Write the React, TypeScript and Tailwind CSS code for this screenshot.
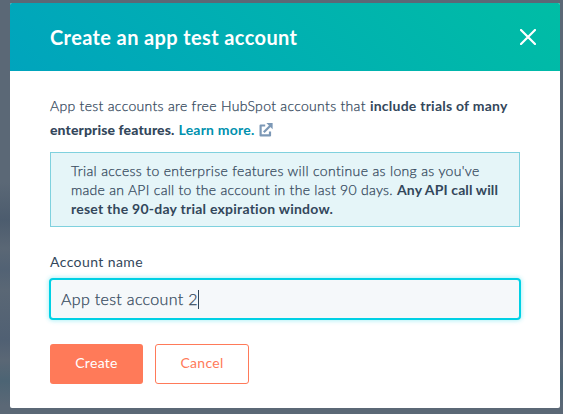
import { useState } from 'react';

function CloseIcon() {
  return (
    <svg width="16" height="16" viewBox="0 0 16 16" fill="none" stroke="#fff" strokeWidth="2.2" strokeLinecap="round">
      <path d="M1 1 15 15M15 1 1 15" />
    </svg>
  );
}

function ExternalLinkIcon() {
  return (
    <svg className="ml-1 shrink-0" width="14" height="14" viewBox="0 0 14 14" fill="none" stroke="#7c98b6" strokeWidth="2.2">
      <path d="M6.2 2.5H1.6V12.4H11V8.6" strokeLinejoin="round" />
      <path d="M4.8 9.2 11.5 2.5" />
      <path d="M7.4 0H13.6V6.2Z" fill="#7c98b6" stroke="none" />
    </svg>
  );
}

export default function App() {
  const [name, setName] = useState('App test account 2');

  return (
    <div className="h-[414px] w-[563px] overflow-hidden bg-[linear-gradient(180deg,#5b6876_0%,#5b6876_44%,#4c5c6e_53%,#5a6775_60%,#526274_65%,#5a6775_70%,#506073_82%,#5a6775_87%,#4c6474_92%,#5b6876_98%)] pl-[10px] pt-[3px] font-['Lato',sans-serif] text-[#33475b]">
      <div className="h-[405px] w-[550px] overflow-hidden rounded-[2px] bg-white">
        <header className="flex h-[68px] items-center justify-between bg-linear-[45deg,#00a4bd,#00bda5] pl-10 pr-6">
          <h1 className="whitespace-nowrap text-[20px] font-bold tracking-[0.38px] text-white">Create an app test account</h1>
          <button aria-label="Close">
            <CloseIcon />
          </button>
        </header>

        <main className="px-10 pt-[23px]">
          <div className="whitespace-nowrap text-[14px] font-light leading-6">
            <p className="tracking-[0.31px] [-webkit-text-stroke:0.25px_#33475b]">
              App test accounts are free HubSpot accounts that{' '}
              <b className="font-bold tracking-[0.24px] [-webkit-text-stroke:0]">include trials of many</b>
            </p>
            <p className="flex items-center font-bold">
              <b className="tracking-[0.12px]">enterprise features.</b>
              <a className="ml-1 tracking-[0.22px] text-[#0091ae]">Learn more.</a>
              <ExternalLinkIcon />
            </p>
          </div>

          <div className="mt-[10px] h-[75px] w-[470px] whitespace-nowrap border border-[#7fd1de] bg-[#e5f5f8] pl-5 pt-[8px] text-[14px] font-light leading-[19px] [-webkit-text-stroke:0.25px_#33475b]">
            <p className="tracking-[0.34px]">Trial access to enterprise features will continue as long as you've</p>
            <p className="tracking-[0.28px]">
              made an API call to the account in the last 90 days.{' '}
              <b className="font-bold tracking-[0.12px] [-webkit-text-stroke:0]">Any API call will</b>
            </p>
            <p>
              <b className="font-bold tracking-[0.24px] [-webkit-text-stroke:0]">reset the 90-day trial expiration window.</b>
            </p>
          </div>

          <label className="mt-[25px] block text-[14px] leading-5 tracking-[0.4px]">Account name</label>
          {/* focused field with the caret after the value */}
          <div className="-ml-px mt-[6px] flex h-[42px] w-[472px] items-center rounded-[4px] border-2 border-[#00d0e4] bg-[#f5f8fa] pl-[10px] text-[16px] font-light shadow-[0_0_4px_1px_rgba(0,208,228,0.3)]">
            <input
              className="field-sizing-content p-0 tracking-[0.33px] outline-none [-webkit-text-stroke:0.25px_#33475b]"
              value={name}
              onChange={(e) => setName(e.target.value)}
            />
            <span className="h-[19px] w-px bg-[#33475b]" />
          </div>

          <div className="mt-6 flex gap-3 text-[14px] tracking-[0.3px]">
            <button className="h-10 w-[93px] rounded-[3px] bg-[#ff7a59] pb-[3px] text-white">Create</button>
            <button className="h-10 w-[94px] rounded-[3px] border border-[#ff7a59] pb-[3px] text-[#ff7a59]">Cancel</button>
          </div>
        </main>
      </div>
    </div>
  );
}
